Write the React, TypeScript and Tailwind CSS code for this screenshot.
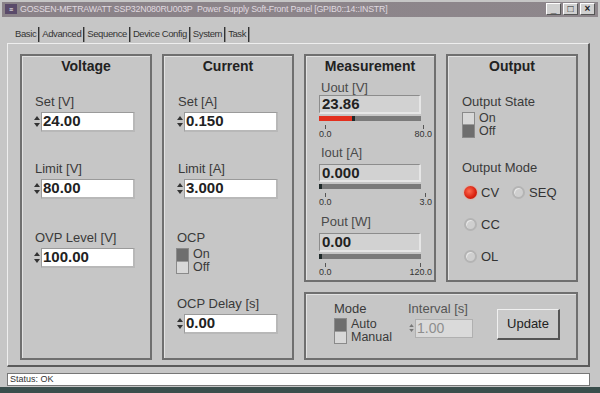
import React from "react";

const font = { fontFamily: '"Liberation Sans", Arial, sans-serif' };

function Spin({ value }: { value: string }) {
  return (
    <div className="flex h-[20px] w-[102px] items-stretch">
      <div className="flex w-[8px] flex-col items-center justify-center gap-[3px]">
        <svg width="6" height="4" viewBox="0 0 6 4"><path d="M0 4 L3 0 L6 4 Z" fill="#333" /></svg>
        <svg width="6" height="4" viewBox="0 0 6 4"><path d="M0 0 L3 4 L6 0 Z" fill="#333" /></svg>
      </div>
      <div className="flex flex-1 items-center border-t-[1px] border-l-[1px] border-b-[2px] border-r-[2px] border-t-[#9a9a9a] border-l-[#9a9a9a] border-b-[#b8b8b8] border-r-[#b8b8b8] bg-white pl-[1px] text-[15px] font-bold leading-[18px] text-[#222]">
        {value}
      </div>
    </div>
  );
}

function Group({ title, className, children }: { title?: string; className: string; children?: React.ReactNode }) {
  return (
    <div className={`flex flex-col border-2 border-[#6f6f6f] shadow-[inset_1px_1px_0_#e2e2e2] ${className}`}>
      {title && (
        <div className="mt-[2px] text-center text-[14px] font-bold leading-[16px] text-[#222]">{title}</div>
      )}
      {children}
    </div>
  );
}

function Label({ children, className = "" }: { children: React.ReactNode; className?: string }) {
  return <div className={`text-[13px] leading-[15px] text-[#3a3a3a] ${className}`}>{children}</div>;
}

function Toggle({ top, a, b }: { top: boolean; a: string; b: string }) {
  return (
    <div className="flex items-stretch">
      <div className="flex w-[13px] flex-col border border-[#8a8a8a]">
        <div className={`h-[12px] ${top ? "bg-[#6e6e6e]" : "border-b border-[#9a9a9a] bg-[#d8d8d8]"}`} />
        <div className={`h-[12px] ${top ? "border-t border-[#9a9a9a] bg-[#d8d8d8]" : "bg-[#6e6e6e]"}`} />
      </div>
      <div className="ml-[4px] flex flex-col text-[12.5px] leading-[13px] text-[#3a3a3a]">
        <span>{a}</span>
        <span>{b}</span>
      </div>
    </div>
  );
}

function Meter({
  label,
  value,
  fill,
  max,
  labelTop,
  boxGap,
  boxH,
}: {
  label: string;
  value: string;
  fill: number;
  max: string;
  labelTop: number;
  boxGap: number;
  boxH: number;
}) {
  return (
    <div className="flex flex-col">
      <div style={{ marginTop: labelTop }}>
        <Label className="ml-[2px] text-[#4a4a4a]">{label}</Label>
      </div>
      <div
        style={{ marginTop: boxGap, height: boxH }}
        className="flex w-[102px] items-center border-t border-l border-[#8c8c8c] border-b-[2px] border-r-[2px] border-b-[#e6e6e6] border-r-[#e6e6e6] bg-[#d2d2d2] pl-[2px] text-[15px] font-bold leading-[17px] text-[#222]"
      >
        {value}
      </div>
      <div className="relative mt-[2px] h-[5px] w-[102px] bg-[#7a7a7a]">
        <div className="absolute left-0 top-0 h-full bg-[#e3301e]" style={{ width: `${fill}px` }} />
        <div className="absolute top-0 h-full w-[3px] bg-[#1f2a2a]" style={{ left: `${fill}px` }} />
      </div>
      <div className="mt-[4px] flex w-[113px] justify-between">
        <div className="flex flex-col items-center">
          <div className="h-[4px] w-[1px] bg-[#555]" />
          <span className="text-[9px] leading-[10px] text-[#333]">0.0</span>
        </div>
        <div className="flex flex-col items-center">
          <div className="h-[4px] w-[1px] bg-[#555]" />
          <span className="text-[9px] leading-[10px] text-[#333]">{max}</span>
        </div>
      </div>
    </div>
  );
}

function Radio({ on, label }: { on?: boolean; label: string }) {
  return (
    <div className="flex h-[15px] items-center">
      <div
        className={`h-[13px] w-[13px] rounded-full ${
          on
            ? "bg-[radial-gradient(circle_at_40%_40%,#ff6a50,#d8200e_60%,#b01a0a)] shadow-[0_0_2px_#ff8a70]"
            : "border-[2px] border-[#b4b4b4] bg-[#cfcfcf] shadow-[inset_1px_1px_0_#e8e8e8]"
        }`}
      />
      <span className="ml-[4px] text-[13px] leading-[15px] text-[#333]">{label}</span>
    </div>
  );
}

export default function App() {
  const tabs = ["Advanced", "Sequence", "Device Config", "System", "Task"];
  return (
    <div style={font} className="relative flex h-[393px] w-[600px] flex-col overflow-hidden bg-[#c6c6c6]">
      {/* title bar */}
      <div className="mx-[2px] mt-[2px] flex h-[15px] items-center bg-[linear-gradient(90deg,#8a8288,#8e878c)] pl-[3px]">
        <div className="flex h-[10px] w-[12px] items-center justify-center bg-[#5a4a6a] text-[7px] font-bold leading-none text-white">
          ≡
        </div>
        <span className="ml-[3px] whitespace-nowrap text-[8.8px] leading-[12px] tracking-[-0.2px] text-[#e0dae0]">
          GOSSEN-METRAWATT SSP32N080RU003P&nbsp;&nbsp;Power Supply Soft-Front Panel [GPIB0::14::INSTR]
        </span>
        <div className="ml-auto mr-[3px] flex gap-[2px]">
          {["_", "□", "×"].map((c, i) => (
            <div
              key={i}
              className="flex h-[12px] w-[15px] items-center justify-center border border-b-[#555] border-r-[#555] border-t-white border-l-white bg-[#d0d0d0] text-[10px] font-bold leading-none text-[#222]"
            >
              {c}
            </div>
          ))}
        </div>
      </div>

      {/* tabs */}
      <div className="ml-[14px] mt-[9px] flex h-[17px] items-center text-[9.5px] leading-[12px] tracking-[-0.4px] text-[#333]">
        <div className="flex items-center px-[1px]">Basic</div>
        {tabs.map((t) => (
          <div key={t} className="flex items-center">
            <div className="mx-[1px] h-[15px] w-[2px] border-l border-[#333] bg-[#888]" />
            <span className="px-[1px]">{t}</span>
          </div>
        ))}
        <div className="mx-[1px] h-[15px] w-[2px] border-l border-[#333] bg-[#888]" />
      </div>

      {/* tab panel */}
      <div className="ml-[7px] h-[327px] w-[583px] border-t border-l border-t-[#eeeeee] border-l-[#eeeeee] border-r-[2px] border-b-[2px] border-r-[#5a5a5a] border-b-[#5a5a5a]">
        <div className="flex pl-[12px] pt-[10px]">
          <Group title="Voltage" className="h-[306px] w-[132px]">
            <div className="ml-[11px] flex flex-col">
              <Label className="ml-[2px] mt-[20px]">Set [V]</Label>
              <div className="mt-[3px]"><Spin value="24.00" /></div>
              <Label className="ml-[2px] mt-[29px]">Limit [V]</Label>
              <div className="mt-[3px]"><Spin value="80.00" /></div>
              <Label className="ml-[2px] mt-[31px]">OVP Level [V]</Label>
              <div className="mt-[3px]"><Spin value="100.00" /></div>
            </div>
          </Group>

          <Group title="Current" className="ml-[10px] h-[306px] w-[132px]">
            <div className="ml-[12px] flex flex-col">
              <Label className="ml-[2px] mt-[20px]">Set [A]</Label>
              <div className="mt-[3px]"><Spin value="0.150" /></div>
              <Label className="ml-[2px] mt-[29px]">Limit [A]</Label>
              <div className="mt-[3px]"><Spin value="3.000" /></div>
              <Label className="ml-[1px] mt-[31px]">OCP</Label>
              <div className="mt-[3px]"><Toggle top a="On" b="Off" /></div>
              <Label className="ml-[1px] mt-[22px]">OCP Delay [s]</Label>
              <div className="mt-[3px]"><Spin value="0.00" /></div>
            </div>
          </Group>

          <div className="ml-[10px] flex flex-col">
            <div className="flex">
              <Group title="Measurement" className="h-[228px] w-[132px]">
                <div className="ml-[13px] flex flex-col">
                  <Meter label="Uout [V]" value="23.86" fill={33} max="80.0" labelTop={6} boxGap={0} boxH={19} />
                  <Meter label="Iout [A]" value="0.000" fill={0} max="3.0" labelTop={6} boxGap={4} boxH={18} />
                  <Meter label="Pout [W]" value="0.00" fill={0} max="120.0" labelTop={7} boxGap={4} boxH={19} />
                </div>
              </Group>
              <Group title="Output" className="ml-[10px] h-[228px] w-[132px]">
                <div className="ml-[14px] flex flex-col">
                  <Label className="mt-[20px]">Output State</Label>
                  <div className="mt-[3px]"><Toggle top={false} a="On" b="Off" /></div>
                  <Label className="mt-[22px]">Output Mode</Label>
                  <div className="ml-[2px] mt-[10px] flex flex-col gap-[17px]">
                    <div className="flex gap-[13px]">
                      <Radio on label="CV" />
                      <Radio label="SEQ" />
                    </div>
                    <Radio label="CC" />
                    <Radio label="OL" />
                  </div>
                </div>
              </Group>
            </div>
            <Group className="mt-[10px] h-[68px] w-[274px]">
              <div className="flex items-start pl-[28px] pt-[7px]">
                <div className="flex flex-col">
                  <Label>Mode</Label>
                  <div className="mt-[2px]"><Toggle top a="Auto" b="Manual" /></div>
                </div>
                <div className="ml-[16px] flex flex-col">
                  <Label className="text-[#555]">Interval [s]</Label>
                  <div className="mt-[3px] flex h-[19px] w-[65px] items-stretch">
                    <div className="flex w-[7px] flex-col items-center justify-center gap-[2px]">
                      <svg width="5" height="3" viewBox="0 0 6 4"><path d="M0 4 L3 0 L6 4 Z" fill="#777" /></svg>
                      <svg width="5" height="3" viewBox="0 0 6 4"><path d="M0 0 L3 4 L6 0 Z" fill="#777" /></svg>
                    </div>
                    <div className="flex flex-1 items-center border border-[#b0b0b0] bg-[#dadada] pl-[1px] text-[14px] leading-[17px] text-[#8e8e8e]">
                      1.00
                    </div>
                  </div>
                </div>
                <div className="ml-[24px] mt-[8px] flex h-[31px] w-[63px] items-center justify-center border border-t-[#f0f0f0] border-l-[#f0f0f0] border-r-[2px] border-b-[2px] border-r-[#555] border-b-[#555] bg-[#cacaca] text-[13px] leading-[15px] text-[#222]">
                  Update
                </div>
              </div>
            </Group>
          </div>
        </div>
      </div>

      {/* status bar */}
      <div className="ml-[7px] mt-[6px] flex h-[13px] w-[583px] items-center border border-[#777] bg-white pl-[2px] text-[9px] leading-[11px] text-[#333]">
        Status: OK
      </div>
      <div className="mt-[1px] h-[6px] w-full bg-[#3a4e4c]" />
    </div>
  );
}
